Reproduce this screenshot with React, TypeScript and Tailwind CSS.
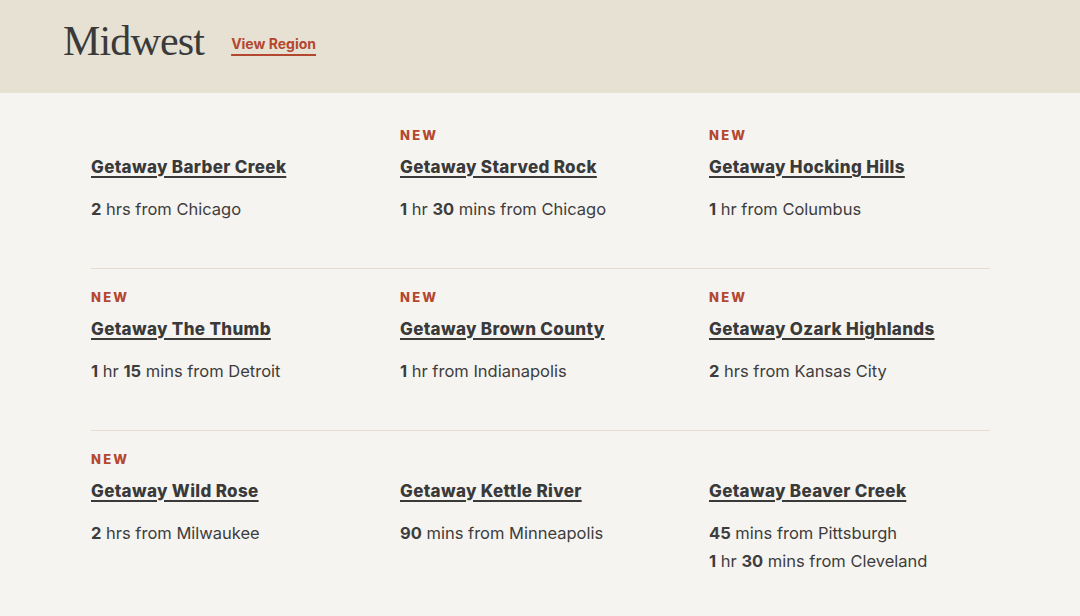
import React from "react";

type Part = { t: string; b?: boolean };
type Item = { isNew: boolean; title: string; lines: Part[][] };

const rows: Item[][] = [
  [
    { isNew: false, title: "Getaway Barber Creek", lines: [[{ t: "2", b: true }, { t: " hrs from Chicago" }]] },
    { isNew: true, title: "Getaway Starved Rock", lines: [[{ t: "1", b: true }, { t: " hr " }, { t: "30", b: true }, { t: " mins from Chicago" }]] },
    { isNew: true, title: "Getaway Hocking Hills", lines: [[{ t: "1", b: true }, { t: " hr from Columbus" }]] },
  ],
  [
    { isNew: true, title: "Getaway The Thumb", lines: [[{ t: "1", b: true }, { t: " hr " }, { t: "15", b: true }, { t: " mins from Detroit" }]] },
    { isNew: true, title: "Getaway Brown County", lines: [[{ t: "1", b: true }, { t: " hr from Indianapolis" }]] },
    { isNew: true, title: "Getaway Ozark Highlands", lines: [[{ t: "2", b: true }, { t: " hrs from Kansas City" }]] },
  ],
  [
    { isNew: true, title: "Getaway Wild Rose", lines: [[{ t: "2", b: true }, { t: " hrs from Milwaukee" }]] },
    { isNew: false, title: "Getaway Kettle River", lines: [[{ t: "90", b: true }, { t: " mins from Minneapolis" }]] },
    {
      isNew: false,
      title: "Getaway Beaver Creek",
      lines: [
        [{ t: "45", b: true }, { t: " mins from Pittsburgh" }],
        [{ t: "1", b: true }, { t: " hr " }, { t: "30", b: true }, { t: " mins from Cleveland" }],
      ],
    },
  ],
];

function Cell({ item }: { item: Item }) {
  return (
    <div className="flex flex-col">
      <div className="h-4 text-[13px] leading-4 font-extrabold tracking-[0.17em] text-[#b4472f]">
        {item.isNew ? "NEW" : ""}
      </div>
      <a
        href="#"
        className="mt-3 self-start text-[17px] leading-6 font-extrabold tracking-[0.02em] text-[#3a3a3a] underline decoration-2 underline-offset-[3px]"
      >
        {item.title}
      </a>
      <div className="mt-4 flex flex-col">
        {item.lines.map((line, i) => (
          <div key={i} className="text-[16.5px] leading-7 text-[#3d3d3d]">
            {line.map((p, j) =>
              p.b ? (
                <span key={j} className="font-bold">
                  {p.t}
                </span>
              ) : (
                <span key={j}>{p.t}</span>
              )
            )}
          </div>
        ))}
      </div>
    </div>
  );
}

export default function App() {
  return (
    <div className="min-h-[616px] w-full bg-[#f6f4f0]" style={{ fontFamily: "Inter, 'Noto Sans', sans-serif" }}>
      <header className="flex h-[93px] items-start bg-[#e7e1d4] pl-[63px] pt-[20px]">
        <h1
          className="text-[42px] leading-none text-[#3a3a3a] tracking-[-0.02em]"
          style={{ fontFamily: "'Liberation Serif', serif" }}
        >
          Midwest
        </h1>
        <a
          href="#"
          className="ml-[27px] mt-[14px] text-[14px] leading-5 font-bold text-[#b4472f] underline decoration-2 underline-offset-[5px]"
        >
          View Region
        </a>
      </header>
      <main className="mx-[91px] w-[899px] pt-[14px]">
        {rows.map((row, i) => (
          <div
            key={i}
            className={`grid grid-cols-3 gap-x-[28px] pt-5 ${i < rows.length - 1 ? "pb-[45px] border-b border-[#e6ddd0]" : "pb-6"}`}
          >
            {row.map((item, j) => (
              <Cell key={j} item={item} />
            ))}
          </div>
        ))}
      </main>
    </div>
  );
}
